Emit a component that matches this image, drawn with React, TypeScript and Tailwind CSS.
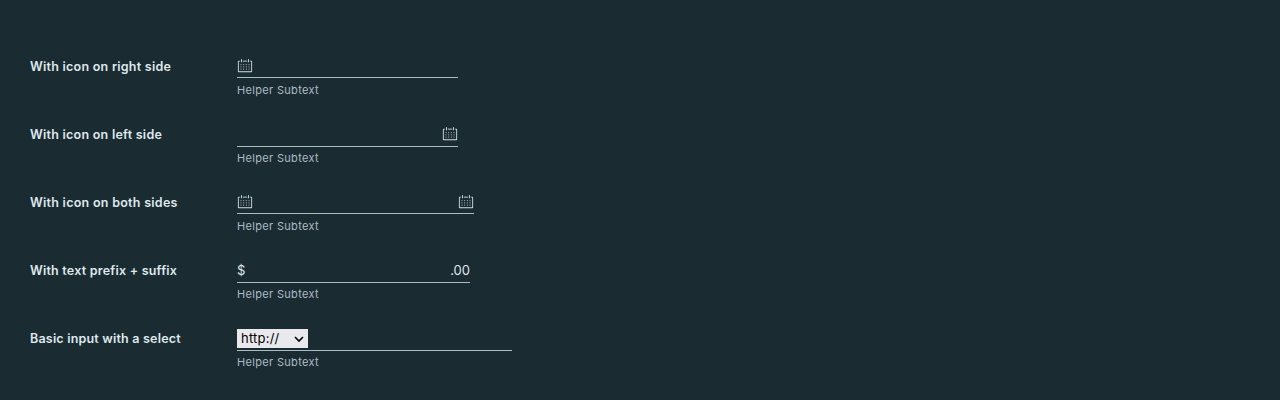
import type { ReactNode } from "react";

function Calendar() {
  return (
    <svg viewBox="0 0 36 36" className="h-4 w-4 shrink-0 fill-[#d3e0e6]">
      <path d="M32.25,6H29V8h3V30H4V8H7V6H3.75A1.78,1.78,0,0,0,2,7.81V30.19A1.78,1.78,0,0,0,3.75,32h28.5A1.78,1.78,0,0,0,34,30.19V7.81A1.78,1.78,0,0,0,32.25,6Z" />
      {[14, 19, 24].map((y) =>
        [8, 14, 20, 26].map((x) => <rect key={`${x}-${y}`} x={x} y={y} width="2" height="2" />),
      )}
      <path d="M10,10a1,1,0,0,0,1-1V3A1,1,0,0,0,9,3V9A1,1,0,0,0,10,10Z" />
      <path d="M26,10a1,1,0,0,0,1-1V3a1,1,0,0,0-2,0V9A1,1,0,0,0,26,10Z" />
      <rect x="13" y="6" width="10" height="2" />
    </svg>
  );
}

type FieldProps = {
  label: string;
  labelClass: string;
  fieldClass: string;
  children: ReactNode;
};

function Field({ label, labelClass, fieldClass, children }: FieldProps) {
  return (
    <div className="flex h-[68px] items-start">
      <label className={`mt-2 w-[207px] shrink-0 whitespace-nowrap text-[12.5px] leading-[18px] font-semibold text-[#dfe8ec] ${labelClass}`}>
        {label}
      </label>
      <div>
        <div className={`flex items-center justify-between border-b border-[#adbbc4] ${fieldClass}`}>{children}</div>
        <div className="mt-1 text-[11px] leading-4 tracking-[0.32px] text-[#adbbc4]">Helper Subtext</div>
      </div>
    </div>
  );
}

export default function App() {
  return (
    <main className="h-[400px] w-full overflow-hidden bg-[#1b2b32] pt-[50px] pl-[30px] font-['Inter',sans-serif]">
      <Field label="With icon on right side" labelClass="tracking-[0.25px]" fieldClass="h-7 w-[221px] pt-[5px]">
        <Calendar />
      </Field>
      <Field label="With icon on left side" labelClass="tracking-[0.25px]" fieldClass="-mb-px h-[29px] w-[221px] pt-1">
        <span />
        <Calendar />
      </Field>
      <Field label="With icon on both sides" labelClass="tracking-[0.27px]" fieldClass="h-7 w-[237px] pt-[5px]">
        <Calendar />
        <Calendar />
      </Field>
      <Field label="With text prefix + suffix" labelClass="tracking-[0.22px]" fieldClass="-mb-px h-[29px] w-[233px] pt-1.5 text-[13px] text-[#dfe8ec]">
        <span>$</span>
        <span>.00</span>
      </Field>
      <Field label="Basic input with a select" labelClass="tracking-[0.2px]" fieldClass="-mb-px h-[29px] w-[275px] pt-[5px]">
        <div className="flex h-[19px] w-[71px] items-center justify-between bg-[#e9e9ed] pr-1 pl-1 text-[13px] tracking-[0.22px] text-black">
          <span>http://</span>
          <svg viewBox="0 0 10 10" className="h-[10px] w-[10px] fill-none stroke-black stroke-[1.6]">
            <path d="M1 3 5 7 9 3" />
          </svg>
        </div>
      </Field>
    </main>
  );
}
